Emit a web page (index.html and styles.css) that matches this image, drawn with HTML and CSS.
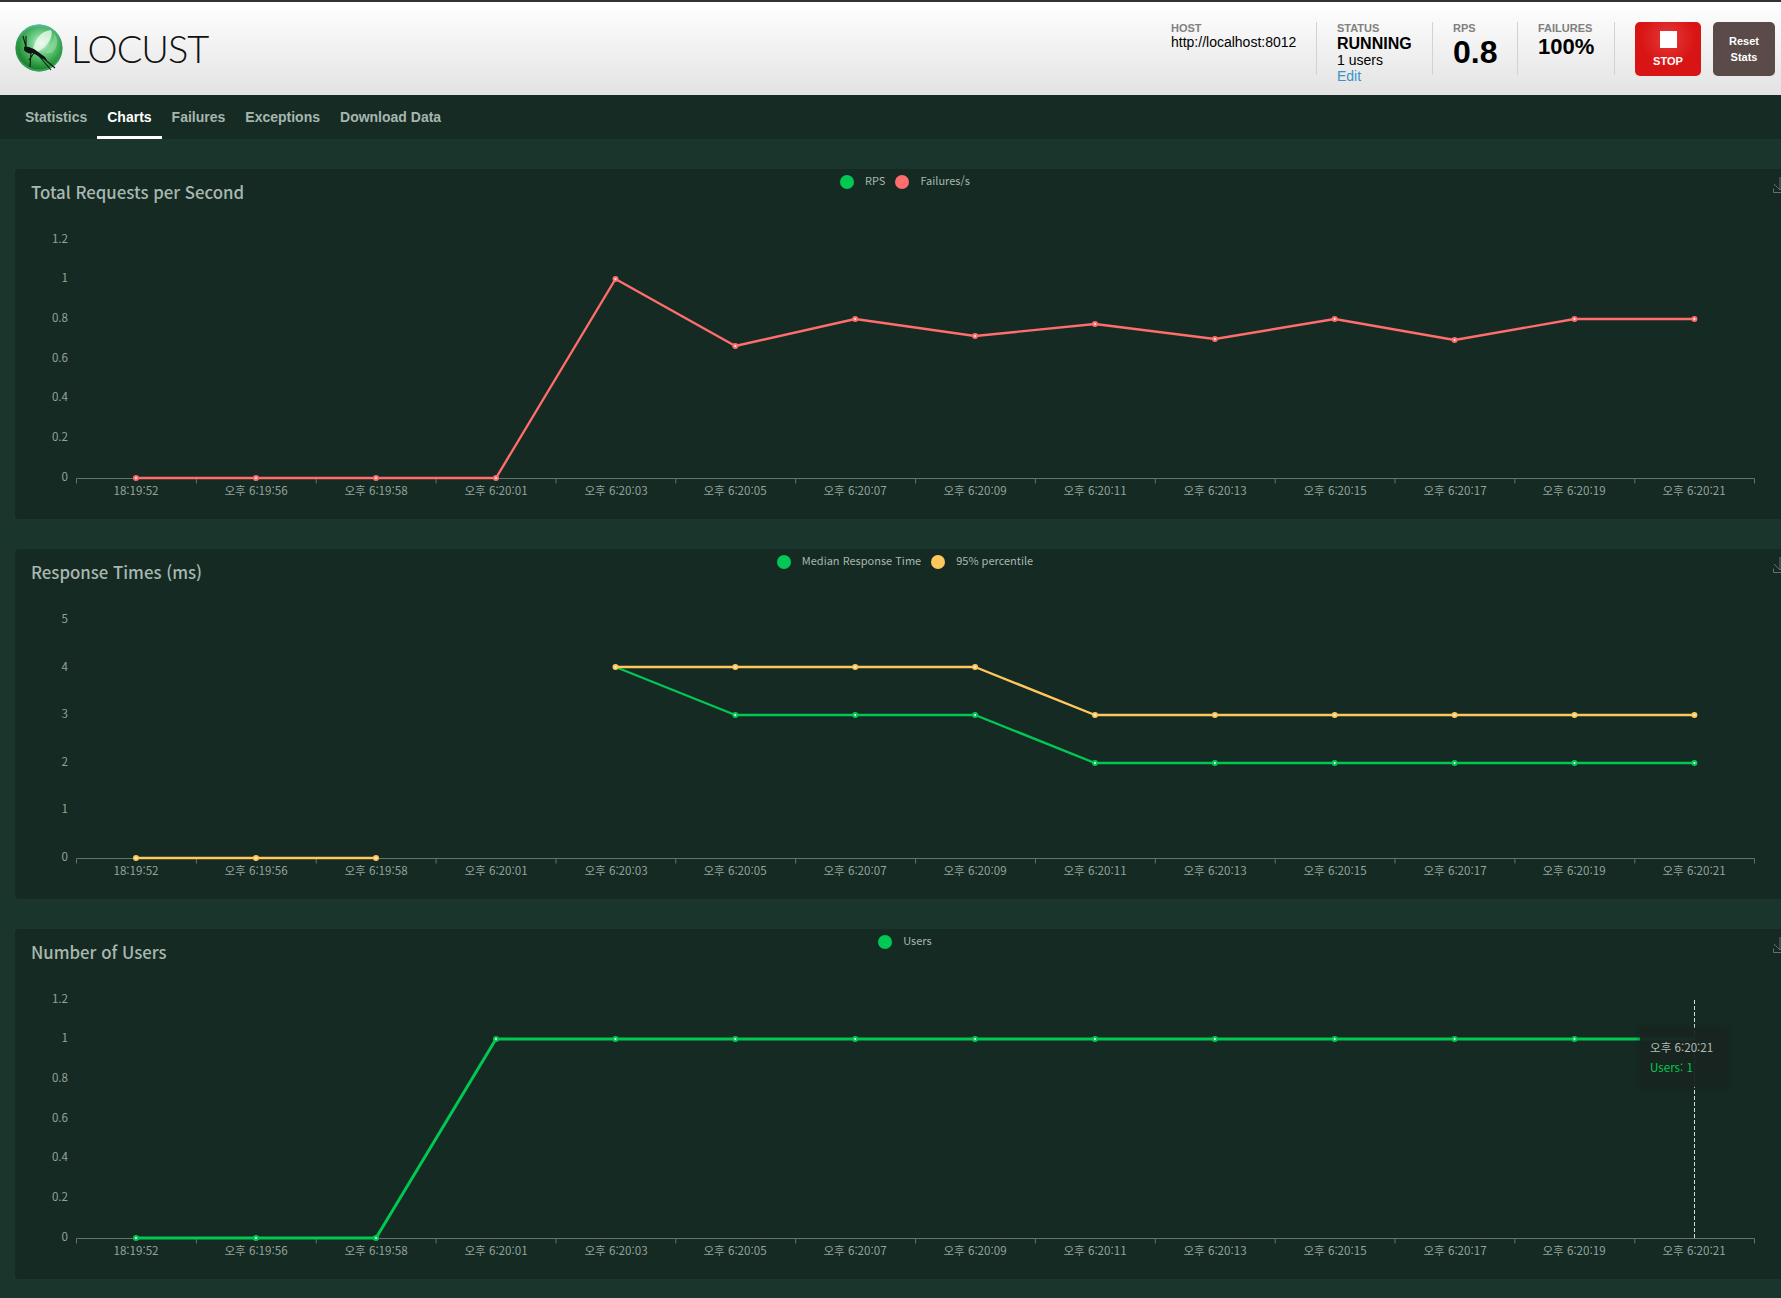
FILE: index.html
```html
<!DOCTYPE html>
<html lang="ko">
<head>
<meta charset="utf-8">
<title>Locust</title>
<link rel="stylesheet" href="styles.css">
</head>
<body>
<header class="topbar">
  <div class="brand">
    <svg class="logo-mark" viewBox="0 0 48 48" width="48" height="48" aria-hidden="true">
      <defs>
        <radialGradient id="orb" cx="0.55" cy="0.4" r="0.62">
          <stop offset="0" stop-color="#d8f5dc"/>
          <stop offset="0.35" stop-color="#6fd08a"/>
          <stop offset="0.75" stop-color="#2d9a3e"/>
          <stop offset="1" stop-color="#146b2a"/>
        </radialGradient>
        <linearGradient id="rim" x1="0" y1="0" x2="0" y2="1">
          <stop offset="0" stop-color="#4fb9a8"/>
          <stop offset="0.5" stop-color="#2f9c55" stop-opacity="0.5"/>
          <stop offset="1" stop-color="#3cb868" stop-opacity="0.7"/>
        </linearGradient>
      </defs>
      <circle cx="24" cy="24" r="23.5" fill="url(#orb)"/>
      <circle cx="24" cy="24" r="22.5" fill="none" stroke="url(#rim)" stroke-width="2"/>
      <path d="M18 25C20 15 26 7 36 6C39 12 32 24 22 28Z" fill="#f2fbf2" opacity="0.75"/>
      <path d="M30 29C36 24 40 16 39 9C44 15 43 24 37 29Z" fill="#b5e6b8" opacity="0.4"/>
      <path d="M9 23C11 22 14 23 19 25L30 33L32 36L28 35L18 29C15 30 11 29 9 26Z" fill="#0f1512"/>
      <path d="M11 23L8 12M11 23L11 12M16 28L15 43M19 29L14 36M24 32L36 46M27 33L40 44" fill="none" stroke="#0f1512" stroke-width="1.1"/>
    </svg>
    <span class="wordmark">LOCUST</span>
  </div>
  <div class="stats">
    <div class="stat stat-host">
      <div class="stat-label">HOST</div>
      <div class="stat-text">http://localhost:8012</div>
    </div>
    <div class="stat stat-status">
      <div class="stat-label">STATUS</div>
      <div class="stat-strong">RUNNING</div>
      <div class="stat-sub">1 users</div>
      <a class="stat-link" href="#">Edit</a>
    </div>
    <div class="stat stat-rps">
      <div class="stat-label">RPS</div>
      <div class="stat-big">0.8</div>
    </div>
    <div class="stat stat-fail">
      <div class="stat-label">FAILURES</div>
      <div class="stat-mid">100%</div>
    </div>
    <div class="stat-end"></div>
    <button class="btn btn-stop"><span class="stop-square"></span>STOP</button>
    <button class="btn btn-reset">Reset<br>Stats</button>
  </div>
</header>

<nav class="tabs">
  <a class="tab" href="#">Statistics</a>
  <a class="tab tab-active" href="#">Charts</a>
  <a class="tab" href="#">Failures</a>
  <a class="tab" href="#">Exceptions</a>
  <a class="tab" href="#">Download Data</a>
</nav>

<main class="charts">
  <section class="card">
    <h2 class="card-title">Total Requests per Second</h2>
    <div class="legend">
      <span class="legend-dot dot-green"></span><span class="legend-text">RPS</span>
      <span class="legend-dot dot-red"></span><span class="legend-text">Failures/s</span>
    </div>
    <svg class="save" viewBox="0 0 20 20" width="20" height="20" aria-hidden="true"><path d="M0.5 11.5V15.5H16M7 0V13M1 7L7 13L13 7"/></svg>
    <svg class="plot" viewBox="15 209 1780 310" width="1780" height="310">
      <g class="yl">
        <text x="68" y="242.5">1.2</text><text x="68" y="282">1</text><text x="68" y="322">0.8</text><text x="68" y="361.5">0.6</text><text x="68" y="401">0.4</text><text x="68" y="441">0.2</text><text x="68" y="480.5">0</text>
      </g>
      <path class="axis" d="M76.5 478.5H1754.5M76.5 478.5v5M196.4 478.5v5M316.2 478.5v5M436.1 478.5v5M556 478.5v5M675.8 478.5v5M795.7 478.5v5M915.6 478.5v5M1035.4 478.5v5M1155.3 478.5v5M1275.2 478.5v5M1395 478.5v5M1514.9 478.5v5M1634.8 478.5v5M1754.5 478.5v5"/>
      <g class="xl">
        <text x="136" y="495">18:19:52</text><text x="256" y="495">오후 6:19:56</text><text x="376" y="495">오후 6:19:58</text><text x="496" y="495">오후 6:20:01</text><text x="616" y="495">오후 6:20:03</text><text x="735" y="495">오후 6:20:05</text><text x="855" y="495">오후 6:20:07</text><text x="975" y="495">오후 6:20:09</text><text x="1095" y="495">오후 6:20:11</text><text x="1215" y="495">오후 6:20:13</text><text x="1335" y="495">오후 6:20:15</text><text x="1455" y="495">오후 6:20:17</text><text x="1574" y="495">오후 6:20:19</text><text x="1694" y="495">오후 6:20:21</text>
      </g>
      <polyline class="line line-red" points="136,478 256,478 376,478 496,478 615.5,279 735.3,346 855.2,319 975.1,336 1095,324 1214.9,339 1334.7,319 1454.6,340 1574.5,319 1694.4,319"/>
      <g class="pts pts-red">
        <circle cx="136" cy="478" r="2"/><circle cx="256" cy="478" r="2"/><circle cx="376" cy="478" r="2"/><circle cx="496" cy="478" r="2"/><circle cx="615.5" cy="279" r="2"/><circle cx="735.3" cy="346" r="2"/><circle cx="855.2" cy="319" r="2"/><circle cx="975.1" cy="336" r="2"/><circle cx="1095" cy="324" r="2"/><circle cx="1214.9" cy="339" r="2"/><circle cx="1334.7" cy="319" r="2"/><circle cx="1454.6" cy="340" r="2"/><circle cx="1574.5" cy="319" r="2"/><circle cx="1694.4" cy="319" r="2"/>
      </g>
    </svg>
  </section>

  <section class="card">
    <h2 class="card-title">Response Times (ms)</h2>
    <div class="legend">
      <span class="legend-dot dot-green"></span><span class="legend-text">Median Response Time</span>
      <span class="legend-dot dot-yellow"></span><span class="legend-text">95% percentile</span>
    </div>
    <svg class="save" viewBox="0 0 20 20" width="20" height="20" aria-hidden="true"><path d="M0.5 11.5V15.5H16M7 0V13M1 7L7 13L13 7"/></svg>
    <svg class="plot" viewBox="15 209 1780 310" width="1780" height="310">
      <g class="yl">
        <text x="68" y="242.5">5</text><text x="68" y="290.5">4</text><text x="68" y="338">3</text><text x="68" y="385.5">2</text><text x="68" y="433">1</text><text x="68" y="480.5">0</text>
      </g>
      <path class="axis" d="M76.5 478.5H1754.5M76.5 478.5v5M196.4 478.5v5M316.2 478.5v5M436.1 478.5v5M556 478.5v5M675.8 478.5v5M795.7 478.5v5M915.6 478.5v5M1035.4 478.5v5M1155.3 478.5v5M1275.2 478.5v5M1395 478.5v5M1514.9 478.5v5M1634.8 478.5v5M1754.5 478.5v5"/>
      <g class="xl">
        <text x="136" y="495">18:19:52</text><text x="256" y="495">오후 6:19:56</text><text x="376" y="495">오후 6:19:58</text><text x="496" y="495">오후 6:20:01</text><text x="616" y="495">오후 6:20:03</text><text x="735" y="495">오후 6:20:05</text><text x="855" y="495">오후 6:20:07</text><text x="975" y="495">오후 6:20:09</text><text x="1095" y="495">오후 6:20:11</text><text x="1215" y="495">오후 6:20:13</text><text x="1335" y="495">오후 6:20:15</text><text x="1455" y="495">오후 6:20:17</text><text x="1574" y="495">오후 6:20:19</text><text x="1694" y="495">오후 6:20:21</text>
      </g>
      <polyline class="line line-green" points="615.5,287 735.3,335 855.2,335 975.1,335 1095,383 1214.9,383 1334.7,383 1454.6,383 1574.5,383 1694.4,383"/>
      <g class="pts pts-green">
        <circle cx="735.3" cy="335" r="2"/><circle cx="855.2" cy="335" r="2"/><circle cx="975.1" cy="335" r="2"/><circle cx="1095" cy="383" r="2"/><circle cx="1214.9" cy="383" r="2"/><circle cx="1334.7" cy="383" r="2"/><circle cx="1454.6" cy="383" r="2"/><circle cx="1574.5" cy="383" r="2"/><circle cx="1694.4" cy="383" r="2"/>
      </g>
      <polyline class="line line-yellow" points="136,478 256,478 376,478"/>
      <polyline class="line line-yellow" points="615.5,287 735.3,287 855.2,287 975.1,287 1095,335 1214.9,335 1334.7,335 1454.6,335 1574.5,335 1694.4,335"/>
      <g class="pts pts-yellow">
        <circle cx="136" cy="478" r="2"/><circle cx="256" cy="478" r="2"/><circle cx="376" cy="478" r="2"/><circle cx="615.5" cy="287" r="2"/><circle cx="735.3" cy="287" r="2"/><circle cx="855.2" cy="287" r="2"/><circle cx="975.1" cy="287" r="2"/><circle cx="1095" cy="335" r="2"/><circle cx="1214.9" cy="335" r="2"/><circle cx="1334.7" cy="335" r="2"/><circle cx="1454.6" cy="335" r="2"/><circle cx="1574.5" cy="335" r="2"/><circle cx="1694.4" cy="335" r="2"/>
      </g>
    </svg>
  </section>

  <section class="card">
    <h2 class="card-title">Number of Users</h2>
    <div class="legend">
      <span class="legend-dot dot-green"></span><span class="legend-text">Users</span>
    </div>
    <svg class="save" viewBox="0 0 20 20" width="20" height="20" aria-hidden="true"><path d="M0.5 11.5V15.5H16M7 0V13M1 7L7 13L13 7"/></svg>
    <svg class="plot" viewBox="15 209 1780 310" width="1780" height="310">
      <g class="yl">
        <text x="68" y="242.5">1.2</text><text x="68" y="282">1</text><text x="68" y="322">0.8</text><text x="68" y="361.5">0.6</text><text x="68" y="401">0.4</text><text x="68" y="441">0.2</text><text x="68" y="480.5">0</text>
      </g>
      <path class="axis" d="M76.5 478.5H1754.5M76.5 478.5v5M196.4 478.5v5M316.2 478.5v5M436.1 478.5v5M556 478.5v5M675.8 478.5v5M795.7 478.5v5M915.6 478.5v5M1035.4 478.5v5M1155.3 478.5v5M1275.2 478.5v5M1395 478.5v5M1514.9 478.5v5M1634.8 478.5v5M1754.5 478.5v5"/>
      <g class="xl">
        <text x="136" y="495">18:19:52</text><text x="256" y="495">오후 6:19:56</text><text x="376" y="495">오후 6:19:58</text><text x="496" y="495">오후 6:20:01</text><text x="616" y="495">오후 6:20:03</text><text x="735" y="495">오후 6:20:05</text><text x="855" y="495">오후 6:20:07</text><text x="975" y="495">오후 6:20:09</text><text x="1095" y="495">오후 6:20:11</text><text x="1215" y="495">오후 6:20:13</text><text x="1335" y="495">오후 6:20:15</text><text x="1455" y="495">오후 6:20:17</text><text x="1574" y="495">오후 6:20:19</text><text x="1694" y="495">오후 6:20:21</text>
      </g>
      <path class="crosshair" d="M1694.5 240V478"/>
      <polyline class="line line-green line-thick" points="136,478 256,478 376,478 496,279 615.5,279 735.3,279 855.2,279 975.1,279 1095,279 1214.9,279 1334.7,279 1454.6,279 1574.5,279 1694.4,279"/>
      <g class="pts pts-green">
        <circle cx="136" cy="478" r="2"/><circle cx="256" cy="478" r="2"/><circle cx="376" cy="478" r="2"/><circle cx="496" cy="279" r="2"/><circle cx="615.5" cy="279" r="2"/><circle cx="735.3" cy="279" r="2"/><circle cx="855.2" cy="279" r="2"/><circle cx="975.1" cy="279" r="2"/><circle cx="1095" cy="279" r="2"/><circle cx="1214.9" cy="279" r="2"/><circle cx="1334.7" cy="279" r="2"/><circle cx="1454.6" cy="279" r="2"/><circle cx="1574.5" cy="279" r="2"/>
      </g>
    </svg>
    <div class="tooltip">
      <div class="tooltip-time">오후 6:20:21</div>
      <div class="tooltip-value">Users: 1</div>
    </div>
  </section>
</main>
</body>
</html>
```

FILE: styles.css
```css
* { box-sizing: border-box; }

html, body {
  margin: 0;
  padding: 0;
  overflow: hidden;
  height: 100%;
}

body {
  background: #1a352b;
  font-family: "Liberation Sans", Arial, sans-serif;
}

.topbar {
  height: 95px;
  border-top: 2px solid #2f3331;
  background: linear-gradient(#ffffff, #e3e3e3);
  display: flex;
  justify-content: space-between;
}

.brand {
  display: flex;
  align-items: center;
  gap: 8px;
  padding: 0 0 1px 15px;
}

.logo-mark { display: block; }

.wordmark {
  font-family: Lato, "Liberation Sans", sans-serif;
  font-weight: 300;
  font-size: 38px;
  line-height: 38px;
  color: #111;
  letter-spacing: -1px;
}

.stats {
  display: flex;
  align-items: flex-start;
  padding: 20px 6px 0 0;
}

.stat {
  height: 53px;
  padding-left: 20px;
  border-right: 1px solid #d2d2d2;
  color: #000;
}

.stat-host { width: 166px; }
.stat-status { width: 116px; }
.stat-rps { width: 85px; }
.stat-fail { width: 97px; }

.stat-end { width: 20px; }

.stat-label {
  font-size: 11px;
  line-height: 13px;
  font-weight: bold;
  color: #808080;
}

.stat-text {
  font-size: 14px;
  line-height: 14px;
}

.stat-strong {
  font-size: 16px;
  line-height: 17px;
  font-weight: bold;
}

.stat-sub {
  font-size: 14px;
  line-height: 16px;
}

.stat-link {
  display: block;
  font-size: 14px;
  line-height: 16px;
  color: #3a93c8;
  text-decoration: none;
}

.stat-big {
  font-size: 32px;
  line-height: 34px;
  font-weight: bold;
}

.stat-mid {
  font-size: 22px;
  line-height: 24px;
  font-weight: bold;
}

.btn {
  display: flex;
  flex-direction: column;
  align-items: center;
  justify-content: flex-start;
  height: 54px;
  border: 0;
  border-radius: 5px;
  color: #fff;
  font-family: "Liberation Sans", Arial, sans-serif;
  font-size: 11px;
  font-weight: bold;
  padding: 0;
}

.btn-stop {
  width: 66px;
  padding-top: 9px;
  margin-right: 12px;
  line-height: 13px;
  background: radial-gradient(circle at 50% 30%, #e43a3a 0, #d91414 55%);
}

.stop-square {
  display: block;
  width: 17px;
  height: 17px;
  background: #fff;
  margin-bottom: 7px;
}

.btn-reset {
  width: 62px;
  padding-top: 11px;
  line-height: 16px;
  background: #5a4b49;
}

.tabs {
  height: 44px;
  background: #162b23;
  display: flex;
  padding-left: 15px;
}

.tab {
  display: block;
  height: 44px;
  padding: 0 10px;
  font-size: 14px;
  font-weight: bold;
  line-height: 44px;
  color: #a6b6ae;
  text-decoration: none;
}

.tab-active {
  color: #fff;
  border-bottom: 3px solid #fff;
}

.charts {
  display: flex;
  flex-direction: column;
  gap: 30px;
  padding: 30px 0 0 15px;
  width: 1795px;
}

.card {
  position: relative;
  width: 1780px;
  height: 350px;
  background: #152a22;
  border-radius: 4px;
  overflow: hidden;
}

.card-title {
  margin: 0;
  height: 40px;
  padding: 11px 0 0 16px;
  font-family: "Noto Sans CJK KR", "Noto Sans", sans-serif;
  font-weight: 500;
  font-size: 16.8px;
  line-height: 24px;
  color: #a8b8b0;
}

.legend {
  position: absolute;
  top: 3px;
  left: 0;
  right: 0;
  display: flex;
  justify-content: center;
  align-items: center;
  height: 16px;
}

.legend-dot {
  width: 14px;
  height: 14px;
  border-radius: 50%;
  margin-top: 3px;
}

.dot-green { background: #00c853; }
.dot-red { background: #ff6d6d; }
.dot-yellow { background: #ffc85c; }

.legend-text {
  margin: 0 10px 0 11px;
  font-family: "Noto Sans CJK KR", "Noto Sans", sans-serif;
  font-size: 11px;
  line-height: 16px;
  font-weight: 400;
  color: #a8b8b0;
}

.legend-text:last-child { margin-right: 0; }

.save {
  position: absolute;
  top: 8px;
  left: 1758px;
  fill: none;
  stroke: #63716b;
  stroke-width: 1;
}

.plot {
  display: block;
  font-family: "Noto Sans CJK KR", "Noto Sans", sans-serif;
  font-size: 11.6px;
  font-weight: 400;
}

.yl text { text-anchor: end; fill: #94a29c; }
.xl text { text-anchor: middle; fill: #94a29c; }

.axis { fill: none; stroke: #65736c; stroke-width: 1; }

.line { fill: none; stroke-width: 2.4; stroke-linejoin: round; }
.line-thick { stroke-width: 3; }
.line-red { stroke: #ff6d6d; }
.line-green { stroke: #00c853; }
.line-yellow { stroke: #ffc85c; }

.pts circle { fill: #f6f6f6; stroke-width: 2; }
.pts-red circle { stroke: #ff6d6d; }
.pts-green circle { stroke: #00c853; }
.pts-yellow circle { stroke: #ffc85c; }

.crosshair {
  fill: none;
  stroke: #d5dbd8;
  stroke-width: 1;
  stroke-dasharray: 4 2;
}

.tooltip {
  position: absolute;
  left: 1625px;
  top: 99px;
  width: 87px;
  height: 59px;
  padding: 9px 10px;
  border-radius: 4px;
  background: rgba(24, 36, 31, 0.94);
  box-shadow: 0 0 4px rgba(20, 30, 26, 0.6);
  font-family: "Noto Sans CJK KR", "Noto Sans", sans-serif;
  font-weight: 400;
  font-size: 11.6px;
  line-height: 20px;
  white-space: nowrap;
}

.tooltip-time { color: #b3bdb8; }
.tooltip-value { color: #00c853; }
```
